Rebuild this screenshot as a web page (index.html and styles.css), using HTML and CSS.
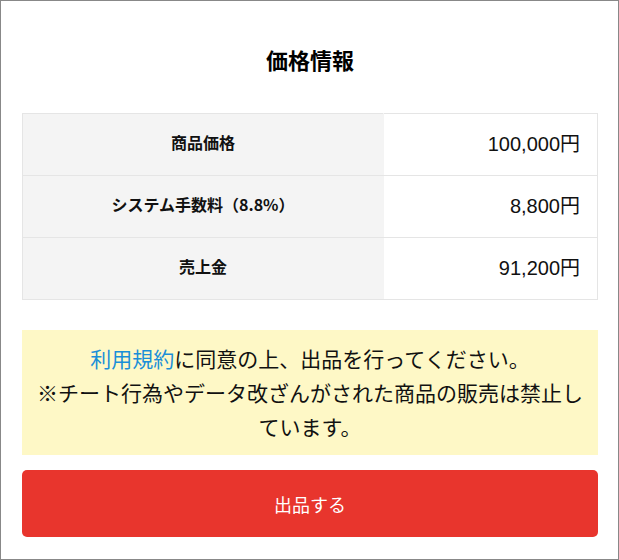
FILE: index.html
```html
<!DOCTYPE html>
<html lang="ja">
<head>
<meta charset="utf-8">
<link rel="stylesheet" href="styles.css">
</head>
<body>
<div class="frame">
  <h1 class="title">価格情報</h1>
  <table class="price-table">
    <tr>
      <th>商品価格</th>
      <td>100,000円</td>
    </tr>
    <tr>
      <th>システム手数料（8.8%）</th>
      <td>8,800円</td>
    </tr>
    <tr>
      <th>売上金</th>
      <td>91,200円</td>
    </tr>
  </table>
  <div class="notice">
    <a class="terms" href="#">利用規約</a>に同意の上、出品を行ってください。<br>※チート行為やデータ改ざんがされた商品の販売は禁止しています。
  </div>
  <button class="submit" type="button">出品する</button>
</div>
</body>
</html>
```
FILE: styles.css
```css
html, body {
  margin: 0;
  padding: 0;
  background: #fff;
}
.frame {
  box-sizing: border-box;
  width: 619px;
  height: 560px;
  border: 1px solid #888;
  padding: 36px 20px 0 21px;
  font-family: "Noto Sans CJK JP", "Liberation Sans", sans-serif;
  color: #111;
  display: flex;
  flex-direction: column;
}
.title {
  margin: 0 0 32px;
  font-size: 22px;
  line-height: 44px;
  font-weight: 700;
  text-align: center;
  color: #000;
}
.price-table {
  width: 100%;
  border-collapse: collapse;
  table-layout: fixed;
}
.price-table th,
.price-table td {
  border: 1px solid #e5e5e5;
  height: 62px;
  padding: 0 0 5px;
  box-sizing: border-box;
}
.price-table th {
  width: 361px;
  background: #f4f4f4;
  border-right-color: #f4f4f4;
  font-size: 16px;
  font-weight: 700;
  text-align: center;
  color: #111;
}
.price-table td {
  background: #fff;
  text-align: right;
  padding-right: 17px;
  font-family: "Liberation Sans", "Noto Sans CJK JP", sans-serif;
  font-size: 20px;
  color: #111;
}
.notice {
  margin-top: 30px;
  background: #fef8c6;
  padding: 11px 10px 12px;
  font-size: 21px;
  line-height: 34px;
  text-align: center;
  color: #111;
}
.terms {
  color: #1a8fd8;
  text-decoration: none;
}
.submit {
  margin-top: 15px;
  height: 67px;
  border: none;
  border-radius: 5px;
  background: #e8352d;
  color: #fff;
  font-family: "Noto Sans CJK JP", sans-serif;
  font-size: 18px;
  width: 100%;
}
```
